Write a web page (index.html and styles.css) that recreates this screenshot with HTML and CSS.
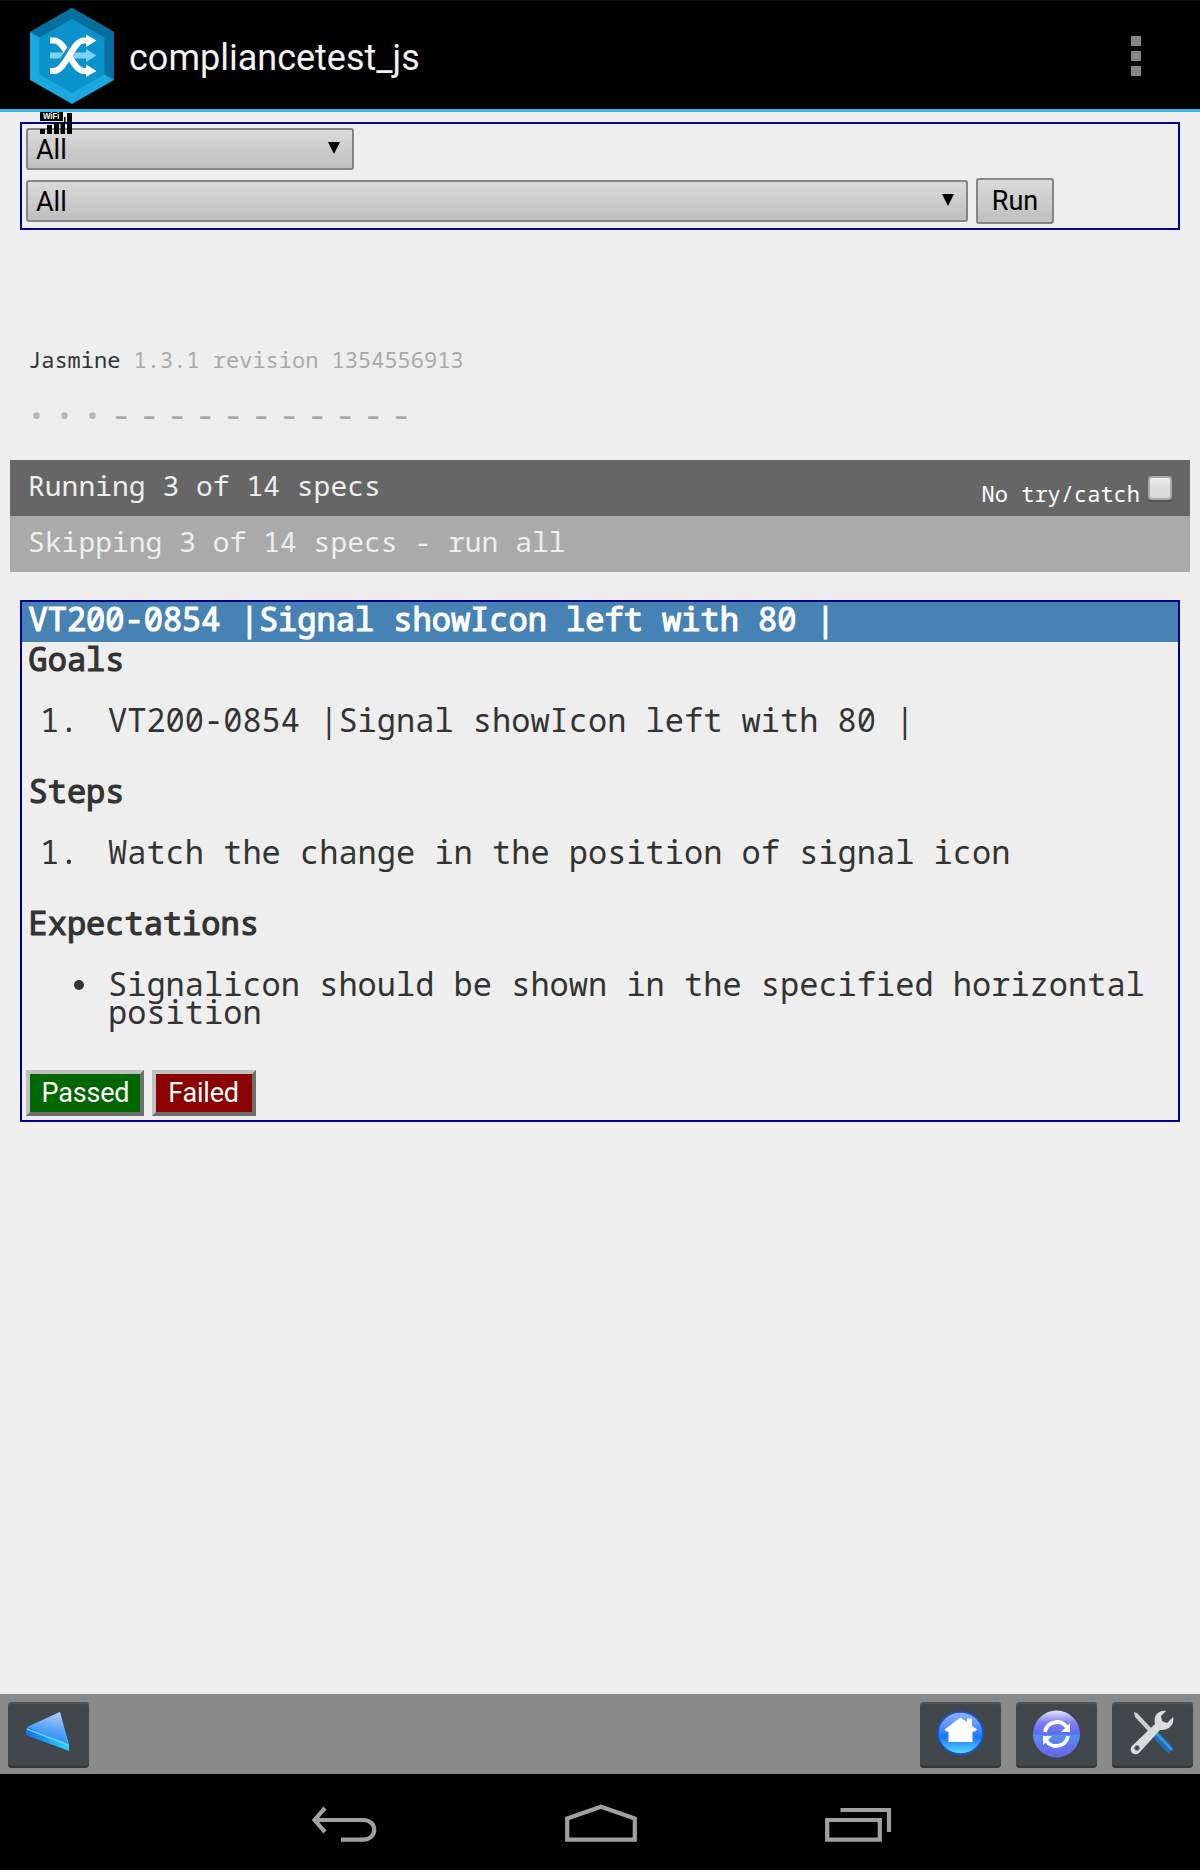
FILE: index.html
```html
<!DOCTYPE html>
<html lang="en">
<head>
<meta charset="utf-8">
<title>compliancetest_js</title>
<link rel="stylesheet" href="styles.css">
</head>
<body>
<header class="appbar">
  <svg class="logo" width="84" height="96" viewBox="0 0 84 96">
    <path d="M42 0 84 24V72L42 96 0 72V24Z" fill="#1ba8e0"/>
    <path d="M0 24 42 0 84 24V72L74 66 42 12 10 30Z" fill="#066f9e"/>
    <path d="M42 11 74.500 29.500V66.500L42 85 9.500 66.500V29.500Z" fill="#0a92cb"/>
    <path d="M20 47.500H58" stroke="#7fd0f2" stroke-width="6"/>
    <path d="M56 41 66.500 47.500 56 54Z" fill="#7fd0f2"/>
    <path d="M20 32.500H24C36 32.500 42 63 54 63H58" fill="none" stroke="#fff" stroke-width="6"/>
    <path d="M28 60C36 54 42 32.500 54 32.500" fill="none" stroke="#0a92cb" stroke-width="9"/>
    <path d="M20 63H24C36 63 42 32.500 54 32.500H58" fill="none" stroke="#fff" stroke-width="6"/>
    <path d="M56 26.500 66.500 32.500 56 39ZM56 56.500 66.500 63 56 69Z" fill="#fff"/>
  </svg>
  <h1 class="app-title">compliancetest_js</h1>
  <div class="overflow"><i></i><i></i><i></i></div>
</header>

<main class="page">
  <svg class="signal" width="32" height="22" viewBox="0 0 32 22">
    <path d="M0 0H23V9H0ZM0 17H5V22H0ZM7 13H12V22H7ZM14 10H19V22H14ZM20.500 10H25V22H20.500ZM24 5H25.500V10H24ZM27 1H32V22H27Z"/>
    <text class="wifi" x="3" y="7.200" textLength="16.500" lengthAdjust="spacingAndGlyphs">WiFi</text>
  </svg>

  <section class="filters">
    <div class="select select-short"><span>All</span></div>
    <div class="filter-row">
      <div class="select select-long"><span>All</span></div>
      <button class="run">Run</button>
    </div>
  </section>

  <div class="banner">Jasmine <span class="version">1.3.1 revision 1354556913</span></div>
  <div class="symbols"><b>•</b><b>•</b><b>•</b><i>-</i><i>-</i><i>-</i><i>-</i><i>-</i><i>-</i><i>-</i><i>-</i><i>-</i><i>-</i><i>-</i></div>

  <div class="alerts">
    <div class="bar running"><span>Running 3 of 14 specs</span>
      <label class="trycatch">No try/catch<input type="checkbox" class="check"></label>
    </div>
    <div class="bar skipping">Skipping 3 of 14 specs - run all</div>
  </div>

  <section class="spec">
    <h2 class="spec-title">VT200-0854 |Signal showIcon left with 80 |</h2>
    <h3>Goals</h3>
    <div class="item"><span class="num">1.</span><span>VT200-0854 |Signal showIcon left with 80 |</span></div>
    <h3>Steps</h3>
    <div class="item"><span class="num">1.</span><span>Watch the change in the position of signal icon</span></div>
    <h3>Expectations</h3>
    <div class="item"><span class="dot"></span><span>Signalicon should be shown in the specified horizontal position</span></div>
    <div class="verdict"><button class="passed">Passed</button><button class="failed">Failed</button></div>
  </section>
</main>

<footer class="toolbar">
  <button class="tool back"><svg width="81" height="66" viewBox="0 0 81 66">
    <defs>
      <linearGradient id="tri" x1=".7" y1="0" x2=".4" y2="1"><stop offset="0" stop-color="#b9c8fb"/><stop offset=".5" stop-color="#5ba5f5"/><stop offset="1" stop-color="#1688f5"/></linearGradient>
      <linearGradient id="edge"><stop offset="0" stop-color="#126df0"/><stop offset="1" stop-color="#25d5fc"/></linearGradient>
    </defs>
    <path d="M18 26 52 10 61 43V49L18 33Z" fill="url(#edge)"/>
    <path d="M19 25 52 10 60 42Z" fill="url(#tri)"/>
    <path d="M19 27 60 43" stroke="#72cefb" stroke-width="1.500"/>
  </svg></button>
  <button class="tool"><svg width="81" height="66" viewBox="0 0 81 66">
    <defs><linearGradient id="home" x1="0" y1="0" x2="0" y2="1"><stop offset="0" stop-color="#8fb4ff"/><stop offset=".3" stop-color="#6294fc"/><stop offset=".6" stop-color="#1676ff"/><stop offset="1" stop-color="#5ce0ff"/></linearGradient></defs>
    <ellipse cx="40.500" cy="31" rx="22.500" ry="21" fill="url(#home)" stroke="#1257d8" stroke-width="1.600"/>
    <path d="M40.500 15.500 57 27.500 55 29.500H52.500V40H28.500V29.500H26L24.500 27.500ZM47 16.500H52V25H47Z" fill="#fff"/>
  </svg></button>
  <button class="tool"><svg width="81" height="66" viewBox="0 0 81 66">
    <defs><linearGradient id="sync" x1="0" y1="0" x2="0" y2="1"><stop offset="0" stop-color="#e4e4fd"/><stop offset=".25" stop-color="#8181f8"/><stop offset=".5" stop-color="#5d69f2"/><stop offset=".53" stop-color="#4f96e9"/><stop offset=".8" stop-color="#6770f2"/><stop offset="1" stop-color="#6468df"/></linearGradient></defs>
    <circle cx="40.500" cy="32" r="23.500" fill="url(#sync)"/>
    <path d="M29 30A12 12 0 0 1 50.500 25M52 34A12 12 0 0 1 30.500 39" fill="none" stroke="#fff" stroke-width="3.800"/>
    <path d="M54 21V30H45ZM27 43V34H36Z" fill="#fff"/>
  </svg></button>
  <button class="tool"><svg width="81" height="66" viewBox="0 0 81 66">
    <path d="M22 10 25 11 41 28 38 31 23 15Z" fill="#cfcfcf"/>
    <path d="M43 32 59 49" stroke="#1d6fb8" stroke-width="7.500"/>
    <path d="M44 31 60 48" stroke="#3b9be6" stroke-width="2.500"/>
    <path d="M54 9C47 8 41 13 43 22L20 44C16 49 22 55 27 51L48 28C56 29 63 23 61 15L55 21 50 19 49 14Z" fill="#dcdcdc"/>
    <circle cx="25" cy="46" r="2.500" fill="#42464a" stroke="#888"/>
  </svg></button>
</footer>

<nav class="sysnav">
  <svg width="66" height="38" viewBox="0 0 66 38"><path d="M3 16H52C67 16 67 35.700 52 35.700H30"/><path d="M14 4 3.500 16 14 28"/></svg>
  <svg width="72" height="38" viewBox="0 0 72 38"><path d="M2.200 14.500 36 2.700 69.800 14.500V35.700H2.200Z"/></svg>
  <svg width="68" height="38" viewBox="0 0 68 38"><path d="M3.200 16H55.800V35.700H3.200ZM16.500 6H65V28"/></svg>
</nav>
</body>
</html>
```
FILE: styles.css
```css
* { box-sizing: border-box; }
body {
  margin: 0;
  width: 1200px;
  height: 1870px;
  display: flex;
  flex-direction: column;
  background: #eee;
  color: #333;
  font-family: "Droid Sans Mono", "Noto Sans Mono", "DejaVu Sans Mono", monospace;
}
h1, h2, h3 { margin: 0; }
button { margin: 0; padding: 0; font-family: Roboto, sans-serif; }

.appbar {
  height: 112px;
  flex: none;
  display: flex;
  align-items: flex-start;
  background: #000;
  border-top: 1px solid #0c0d0e;
  border-bottom: 3px solid #33b5e5;
  padding: 7px 59px 0 30px;
}
.app-title {
  margin: 28px 0 0 15px;
  flex: 1;
  font: 400 36px/44px Roboto, sans-serif;
  color: #f3f3f3;
}
.overflow { display: grid; gap: 5px; margin-top: 28px; }
.overflow i { width: 10px; height: 10px; background: #868686; }

.page { flex: 1; position: relative; padding: 10px 10px 0; }
.signal { position: absolute; left: 40px; top: 0; }
.wifi { font: bold 8.5px "Liberation Sans", sans-serif; fill: #fff; }

.filters {
  height: 108px;
  margin: 0 10px;
  border: 2px solid #00008b;
  padding: 4px;
}
.filter-row { display: flex; align-items: center; gap: 8px; margin-top: 8px; }
.select, .run {
  border: 2px solid #858585;
  border-radius: 3px;
  background: linear-gradient(#dadada, #bfbfbf);
  color: #000;
  font: 400 27px/40px Roboto, sans-serif;
}
.select {
  height: 42px;
  padding: 0 12px 0 8px;
  display: flex;
  justify-content: space-between;
}
.select::after {
  content: "";
  width: 12px;
  height: 12px;
  margin-top: 12px;
  background: #000;
  clip-path: polygon(0 0, 100% 0, 50% 100%);
}
.select-short { width: 328px; }
.select-long { width: 942px; }
.run { width: 78px; height: 46px; line-height: 42px; }

.banner { margin: 114px 0 0 18px; font-size: 22px; line-height: 30px; }
.version { color: #aaa; }
.symbols { display: flex; margin: 26px 0 0 17px; height: 30px; font-size: 28px; line-height: 30px; }
.symbols b, .symbols i { width: 28px; font: inherit; padding-left: 1px; }
.symbols b { color: #b7b7b7; }
.symbols i { color: #aaa; font-size: 34px; line-height: 28px; padding-left: 0; }

.alerts { margin-top: 30px; }
.bar {
  height: 56px;
  padding: 0 18px 5px;
  display: flex;
  justify-content: space-between;
  font-size: 28px;
  line-height: 51px;
  color: #eee;
}
.running { background: #666; }
.skipping { background: #aaa; }
.trycatch { display: flex; font-size: 22px; line-height: 66px; color: #fff; height: 51px; }
.check {
  appearance: none;
  width: 24px;
  height: 24px;
  margin: 16px 0 0 8px;
  border: 2px solid #aaa;
  border-radius: 4px;
  background: linear-gradient(#eee, #dcdcdc 50%);
  box-shadow: 0 2px 1px #555;
}

.spec {
  height: 522px;
  margin: 28px 10px 0;
  border: 2px solid #00008b;
  font-size: 32px;
}
.spec-title, .spec h3 {
  height: 38px;
  padding-left: 6.5px;
  font-size: 32px;
  font-weight: 400;
  line-height: 34px;
  -webkit-text-stroke: 1.2px currentColor;
}
.spec .spec-title { height: 40px; background: #4682b4; color: #fff; }
.item { display: grid; grid-template-columns: 86px 1fr; line-height: 28px; padding-right: 4px; margin: 26px 0 40px; }
.num { padding-left: 18px; }
.dot { width: 10px; height: 10px; margin: 10px 0 0 52px; border-radius: 50%; background: #333; }
.verdict { display: flex; gap: 8px; margin: 44px 0 0 4px; }
.item:has(+ .verdict) { margin-bottom: 0; }
.verdict button {
  height: 46px;
  border: 4px solid;
  border-color: #c0c0c0 #6e6e6e #6e6e6e #c0c0c0;
  color: #fff;
  font-size: 27px;
  line-height: 38px;
}
.verdict .passed { width: 118px; background: #060; letter-spacing: -.2px; padding-left: 1px; }
.verdict .failed { width: 104px; background: #8b0000; letter-spacing: -.2px; padding-right: 1px; }

.toolbar {
  height: 80px;
  flex: none;
  padding: 8px 7.5px 0;
  display: flex;
  gap: 15px;
  background: #8a8a8a;
}
.tool {
  width: 81px;
  height: 66px;
  border: 0;
  border-radius: 4px;
  background: #42474b;
  box-shadow: inset 0 2px 1px #54585b, inset 0 -2px 1px #33373a;
}
.tool svg { display: block; }
.back { margin-right: auto; }

.sysnav {
  height: 96px;
  flex: none;
  display: flex;
  justify-content: space-between;
  padding: 30px 308px 0 311px;
  background: #000;
}
.sysnav svg { fill: none; stroke: #a0a0a0; stroke-width: 4.2; }
```
